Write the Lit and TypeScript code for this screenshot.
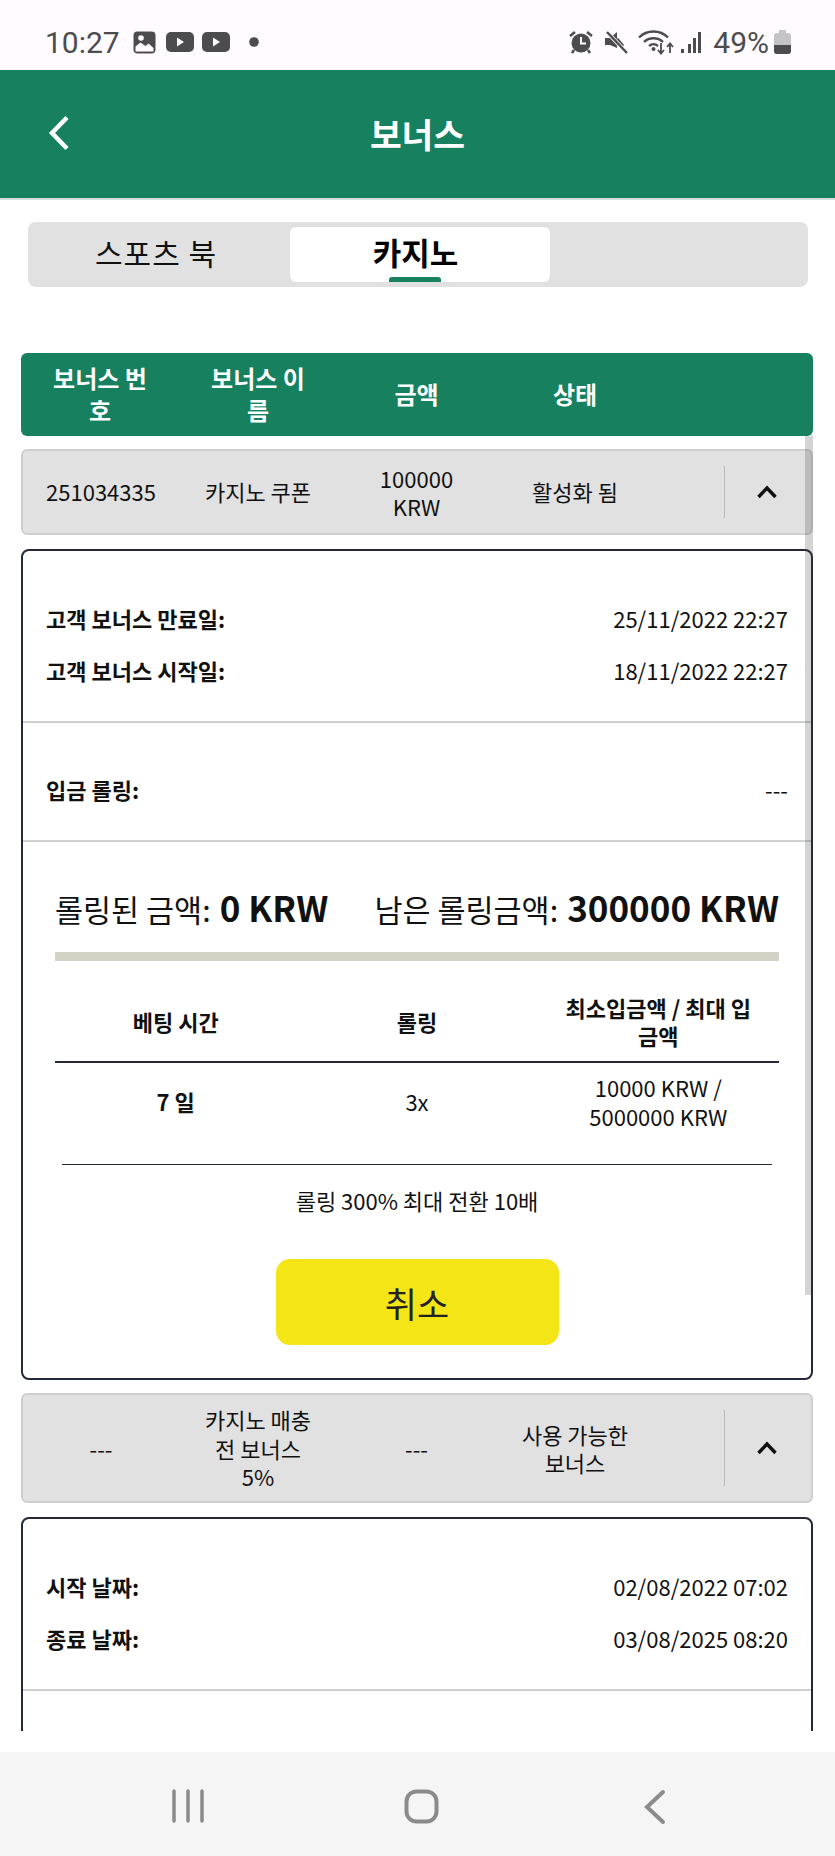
import { LitElement, html, css } from "lit";
import { customElement } from "lit/decorators.js";

const chevronUp = html`<svg class="chev" width="22" height="14" viewBox="0 0 22 14"><path d="M2.5 12 11 3l8.500 9" fill="none" stroke="#111" stroke-width="3.400"/></svg>`;

@customElement("app-root")
export class AppRoot extends LitElement {
  static styles = css`
    :host { display: flex; flex-direction: column; width: 835px; height: 1856px; overflow: hidden; background: #fff; color: #111; font-family: "Noto Sans CJK KR", "Noto Sans", sans-serif; position: relative; }
    * { box-sizing: border-box; }
    .status { height: 70px; flex: none; background: #fffbfe; display: flex; align-items: center; justify-content: space-between; padding: 14px 44px 0 45px; color: #4c4c4e; font-family: Roboto, sans-serif; font-size: 30px; }
    .status .left, .status .right { display: flex; align-items: center; }
    .status svg { display: block; }
    .time { margin-right: 14px; width: 74px; }
    .pct { margin: 0 5px 0 11px; font-size: 30px; }
    .i10 { margin-right: 10px; } .i8 { margin-right: 8px; } .i6 { margin-right: 6px; } .i11 { margin-right: 11px; } .dot { margin-left: 19px; }
    .top { height: 130px; flex: none; background: #16805f; border-bottom: 2px solid #d9dedc; display: flex; align-items: center; justify-content: center; position: relative; color: #fff; font-size: 34.5px; font-weight: 700; padding-bottom: 2px; }
    .back { position: absolute; left: 47px; top: 45px; }
    .tabs { flex: none; margin: 22px 27px 0 28px; height: 65px; background: #e1e1e1; border-radius: 8px; padding: 5px 0; display: grid; grid-template-columns: 262px 260px; }
    .tab { display: flex; align-items: center; justify-content: center; font-size: 30px; padding: 0 6px 6px 0; letter-spacing: 1px; }
    .tab.on { background: #fff; border-radius: 6px; font-weight: 700; font-size: 31px; padding: 0 9px 6px 0; position: relative; letter-spacing: 0; color: #000; }
    .tab.on::after { content: ""; position: absolute; left: 99px; bottom: 0; width: 52px; height: 5px; border-radius: 3px 3px 0 0; background: #16805f; }
    .scroll { flex: 1; min-height: 0; overflow: hidden; padding: 66px 22px 0 21px; position: relative; }
    .thead { height: 83px; background: #16805f; border-radius: 6px; color: #fff; font-weight: 700; font-size: 24px; line-height: 32px; display: grid; grid-template-columns: 158px 158px 159px 158px; align-items: center; text-align: center; padding-bottom: 1px; }
    .thead div { padding: 0 29px; }
    .row { margin-top: 13px; min-height: 86px; background: #e1e1e1; border: 2px solid #cfcfcf; border-radius: 6px; display: grid; grid-template-columns: 156px 158px 159px 158px 1fr; align-items: center; text-align: center; font-size: 22px; line-height: 28.5px; }
    .row > div { padding: 10.250px 23px 10.250px; }
    .row > .w { padding: 10px 0 12px; }
    .row > .x { padding: 0; align-self: stretch; border-left: 1px solid #b9b9b9; margin: 15px 0 15px 70px; display: flex; align-items: center; justify-content: center; width: 84px; }
    .chev { display: block; }
    .card { margin-top: 14px; border: 2px solid #23283a; border-radius: 8px; background: #fff; }
    .sec { padding: 42px 23px 24px; border-bottom: 2px solid #cfd0d0; }
    .sec.s2 { padding-top: 41px; }
    .kv { height: 52px; display: flex; align-items: center; justify-content: space-between; font-size: 22px; padding-bottom: 2px; }
    .kv b { font-weight: 700; }
    .roll { padding: 0 32px; }
    .totals { height: 110px; padding-top: 19px; display: flex; align-items: center; justify-content: space-between; font-size: 30.500px; white-space: nowrap; }
    .totals b { font-size: 35px; font-weight: 700; margin-left: 9px; }
    .bar { height: 9px; background: #d2d3c4; }
    .grid { display: grid; grid-template-columns: 1fr 1fr 1fr; text-align: center; font-size: 22px; line-height: 28.5px; }
    .grid > div { display: flex; align-items: center; justify-content: center; padding: 0 20px; }
    .gh { height: 102px; font-weight: 700; border-bottom: 2px solid #23283a; padding-top: 20px; }
    .gb { height: 101px; padding-bottom: 24px; }
    .note { text-align: center; font-size: 22px; line-height: 30px; border-top: 1px solid #23283a; margin: 0 7px; padding-top: 20px; }
    .btnw { display: flex; justify-content: center; margin: 44px 0 33px; }
    .btn { width: 283px; height: 86px; border-radius: 14px; background: #f3e516; font-size: 35px; border: none; color: #222; font-family: inherit; display: flex; align-items: center; justify-content: center; }
    .sb { position: absolute; right: 22px; top: 149px; width: 8px; height: 859px; background: rgba(60, 60, 60, 0.22); }
    .nav { height: 104px; flex: none; background: #f5f5f5; position: relative; }
    .nav svg { position: absolute; top: 37px; }
    .n1 { left: 171px; } .n2 { left: 403px; } .n3 { left: 642px; }
    .fade { height: 21px; background: #fff; flex: none; }
  `;

  private detail(top: [string, string][], extra: unknown) {
    return html`<div class="card">
      <div class="sec">${top.map(([k, v]) => html`<div class="kv"><b>${k}</b><span>${v}</span></div>`)}</div>
      ${extra}
    </div>`;
  }

  render() {
    return html`
      <div class="status">
        <div class="left">
          <span class="time">10:27</span>
          <svg class="i10" width="23" height="23" viewBox="0 0 23 23"><rect x=".5" y=".5" width="22" height="22" rx="4" fill="#4c4c4e"/><path d="M2.500 20.500v-5l5-4 5 3.500 3-2.500 5 4.500v3.500z" fill="#fffbfe"/><circle cx="8" cy="7" r="2.800" fill="#fffbfe"/></svg>
          <svg class="i8" width="28" height="20" viewBox="0 0 28 20"><rect width="28" height="20" rx="5" fill="#4c4c4e"/><path d="M11 5.500v9l7-4.500z" fill="#fffbfe"/></svg>
          <svg width="28" height="20" viewBox="0 0 28 20"><rect width="28" height="20" rx="5" fill="#4c4c4e"/><path d="M11 5.500v9l7-4.500z" fill="#fffbfe"/></svg>
          <svg class="dot" width="10" height="10" viewBox="0 0 10 10"><circle cx="5" cy="5" r="4.800" fill="#4c4c4e"/></svg>
        </div>
        <div class="right">
          <svg class="i11" width="24" height="23" viewBox="0 0 24 23"><path d="M1 5 6 1M23 5l-5-4" stroke="#4c4c4e" stroke-width="2.500" fill="none"/><path d="M5 19l-2 3M19 19l2 3" stroke="#4c4c4e" stroke-width="2.500"/><circle cx="12" cy="12" r="9.500" fill="#4c4c4e"/><path d="M12 6v6.500h5" stroke="#fffbfe" stroke-width="2" fill="none"/></svg>
          <svg class="i10" width="24" height="24" viewBox="0 0 24 24"><path d="M1 8h5l7-6v16l-7-3H1z" fill="#4c4c4e"/><path d="M13 9l6 7" stroke="#4c4c4e" stroke-width="3"/><path d="M2 1l21 22" stroke="#fffbfe" stroke-width="4"/><path d="M3 2l20 21" stroke="#4c4c4e" stroke-width="2.500"/></svg>
          <svg class="i6" width="36" height="26" viewBox="0 0 36 26"><g fill="none" stroke="#4c4c4e" stroke-width="2.300"><path d="M1 8.500c8-8 21-8 29 0"/><path d="M6 13c5-5 14-5 19 0"/><path d="M11 17c3-2.500 6-2.500 9 0"/></g><circle cx="15.500" cy="20" r="2" fill="#4c4c4e"/><path d="M23 14v10m-3-3 3 3.500 3-3.500M32 24V15m-3 3 3-3.500 3 3.500" fill="none" stroke="#4c4c4e" stroke-width="1.800"/></svg>
          <svg width="22" height="23" viewBox="0 0 22 23"><g fill="#4c4c4e"><rect x="1" y="18" width="3" height="4"/><rect x="8" y="13" width="3" height="9"/><rect x="13" y="7" width="3" height="15"/><rect x="18" y="1" width="3" height="21"/></g></svg>
          <span class="pct">49%</span>
          <svg width="17" height="24" viewBox="0 0 17 24"><path d="M5 0h7v3h2a3 3 0 0 1 3 3v15a3 3 0 0 1-3 3H3a3 3 0 0 1-3-3V6a3 3 0 0 1 3-3h2z" fill="#c4c3c5"/><path d="M0 15h17v6a3 3 0 0 1-3 3H3a3 3 0 0 1-3-3z" fill="#4c4c4e"/></svg>
        </div>
      </div>
      <div class="top">
        <svg class="back" width="24" height="36" viewBox="0 0 24 36"><path d="M20 2.500 5 18l15 15.500" fill="none" stroke="#fff" stroke-width="4.500"/></svg>
        보너스
      </div>
      <div class="tabs">
        <div class="tab">스포츠 북</div>
        <div class="tab on">카지노</div>
      </div>
      <div class="scroll">
        <div class="thead"><div>보너스 번호</div><div>보너스 이름</div><div>금액</div><div>상태</div></div>
        <div class="row">
          <div class="w">251034335</div><div class="w">카지노 쿠폰</div><div>100000 KRW</div><div class="w">활성화 됨</div>
          <div class="x">${chevronUp}</div>
        </div>
        ${this.detail(
          [["고객 보너스 만료일:", "25/11/2022 22:27"], ["고객 보너스 시작일:", "18/11/2022 22:27"]],
          html`
            <div class="sec s2"><div class="kv"><b>입금 롤링:</b><span>---</span></div></div>
            <div class="roll">
              <div class="totals"><span>롤링된 금액:<b>0 KRW</b></span><span>남은 롤링금액:<b>300000 KRW</b></span></div>
              <div class="bar"></div>
              <div class="grid gh"><div>베팅 시간</div><div>롤링</div><div>최소입금액 / 최대 입금액</div></div>
              <div class="grid gb"><div><b>7 일</b></div><div>3x</div><div>10000 KRW / 5000000 KRW</div></div>
              <div class="note">롤링 300% 최대 전환 10배</div>
              <div class="btnw"><button class="btn">취소</button></div>
            </div>`
        )}
        <div class="row">
          <div>---</div><div>카지노 매충전 보너스 5%</div><div>---</div><div>사용 가능한 보너스</div>
          <div class="x">${chevronUp}</div>
        </div>
        ${this.detail([["시작 날짜:", "02/08/2022 07:02"], ["종료 날짜:", "03/08/2025 08:20"]], html`<div class="sec"></div>`)}
        <div class="sb"></div>
      </div>
      <div class="fade"></div>
      <div class="nav">
        <svg class="n1" width="34" height="34" viewBox="0 0 34 34"><g stroke="#8b8b8b" stroke-width="3.500" stroke-linecap="round"><path d="M3 2v30M17 2v30M31 2v30"/></g></svg>
        <svg class="n2" width="37" height="35" viewBox="0 0 37 35"><rect x="3.500" y="2.500" width="30" height="30" rx="10" fill="none" stroke="#8b8b8b" stroke-width="4"/></svg>
        <svg class="n3" width="26" height="36" viewBox="0 0 26 36"><path d="M21 3 5 18l16 15" fill="none" stroke="#8b8b8b" stroke-width="4" stroke-linecap="round"/></svg>
      </div>
    `;
  }
}
